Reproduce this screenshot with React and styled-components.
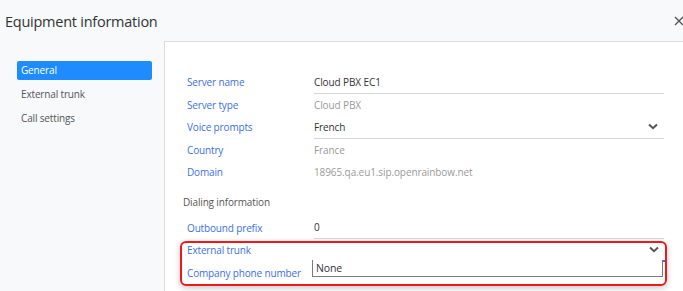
import React from "react";
import styled, { createGlobalStyle } from "styled-components";

const Global = createGlobalStyle`
  html, body {
    margin: 0;
    padding: 0;
    background: #f7f9fb;
    font-family: "Open Sans", "Noto Sans", sans-serif;
    overflow: hidden;
  }
`;

const Dialog = styled.div`
  width: 683px;
  height: 291px;
  display: flex;
  flex-direction: column;
  background: #f7f9fb;
`;

const Header = styled.div`
  height: 41px;
  flex: none;
  display: flex;
  align-items: center;
  justify-content: space-between;
  padding: 0 0 0 5px;
  box-sizing: border-box;
`;

const Title = styled.div`
  font-size: 14.5px;
  color: #333;
  letter-spacing: -0.25px;
  margin-top: 2px;
`;

const Close = styled.div`
  width: 12px;
  height: 12px;
  margin-right: -2px;
  margin-top: 1px;
  color: #555;
  display: flex;
`;

const Body = styled.div`
  flex: 1;
  display: flex;
  min-height: 0;
`;

const Sidebar = styled.div`
  width: 164px;
  flex: none;
  padding: 20px 12px 0 17px;
  box-sizing: border-box;
  display: flex;
  flex-direction: column;
  gap: 5px;
`;

const NavItem = styled.div`
  height: 19px;
  line-height: 19px;
  padding-left: 4px;
  border-radius: 2px;
  font-size: 10px;
  letter-spacing: -0.15px;
  color: ${(p) => (p.active ? "#fff" : "#555")};
  background: ${(p) => (p.active ? "#1e8cff" : "transparent")};
`;

const Panel = styled.div`
  flex: 1;
  background: #fff;
  border-top: 1px solid #dcdcdc;
  border-left: 1px solid #dcdcdc;
  padding: 29px 19px 0 15px;
  box-sizing: border-box;
`;

const Row = styled.div`
  display: grid;
  grid-template-columns: 127px 1fr;
  height: ${(p) => p.h || 22.5}px;
  align-items: stretch;
  padding-left: 7px;
`;

const Label = styled.div`
  display: flex;
  align-items: center;
  font-size: 10px;
  letter-spacing: -0.15px;
  color: #3d6fe6;
  padding-bottom: ${(p) => p.lift || 0}px;
`;

const Value = styled.div`
  position: relative;
  display: flex;
  align-items: center;
  justify-content: space-between;
  font-size: 10px;
  letter-spacing: -0.1px;
  color: ${(p) => (p.muted ? "#9a9a9a" : "#333")};
  border-bottom: ${(p) =>
    p.focus ? "2px solid #1e7be0" : p.line ? "1px solid #d6d6d6" : "none"};
  box-sizing: border-box;
`;

const Chevron = styled.svg`
  width: 10px;
  height: 7px;
  margin-right: 6px;
  margin-top: ${(p) => (p.up ? "-5px" : "0")};
`;

const SectionTitle = styled.div`
  height: 33px;
  display: flex;
  align-items: center;
  padding-left: 3px;
  padding-top: 4px;
  box-sizing: border-box;
  font-size: 10px;
  letter-spacing: -0.15px;
  color: #555;
`;

const Highlight = styled.div`
  margin-right: -3px;
  border: 2px solid #f01818;
  border-radius: 6px;
  box-shadow: 0 2px 6px rgba(0, 0, 0, 0.22);
  padding: 0 0 0 5px;
  margin-top: 2px;
  height: 45px;
  box-sizing: border-box;
  ${Row} {
    padding-left: 0;
  }
`;

const ListBox = styled.div`
  position: absolute;
  left: -2px;
  right: 2px;
  top: 100%;
  height: 17px;
  background: #fff;
  border: 1px solid #7a7a7a;
  border-top: none;
  box-sizing: border-box;
  font-size: 10.5px;
  color: #333;
  padding-left: 3px;
  line-height: 16px;
  z-index: 2;
`;

const Arrow = ({ up }) => (
  <Chevron viewBox="0 0 10 7" up={up}>
    <path d="M1 1.5 L5 5.2 L9 1.5" fill="none" stroke="#555" strokeWidth="2" />
  </Chevron>
);

export default function App() {
  return (
    <Dialog>
      <Global />
      <Header>
        <Title>Equipment information</Title>
        <Close>
          <svg viewBox="0 0 12 12" width="12" height="12">
            <path d="M2 2 L10 10 M10 2 L2 10" stroke="#555" strokeWidth="1.4" />
          </svg>
        </Close>
      </Header>
      <Body>
        <Sidebar>
          <NavItem active>General</NavItem>
          <NavItem>External trunk</NavItem>
          <NavItem>Call settings</NavItem>
        </Sidebar>
        <Panel>
          <Row>
            <Label>Server name</Label>
            <Value line>Cloud PBX EC1</Value>
          </Row>
          <Row>
            <Label>Server type</Label>
            <Value muted>Cloud PBX</Value>
          </Row>
          <Row>
            <Label>Voice prompts</Label>
            <Value line>
              French
              <Arrow />
            </Value>
          </Row>
          <Row>
            <Label>Country</Label>
            <Value muted>France</Value>
          </Row>
          <Row>
            <Label>Domain</Label>
            <Value muted>18965.qa.eu1.sip.openrainbow.net</Value>
          </Row>
          <SectionTitle>Dialing information</SectionTitle>
          <Row>
            <Label>Outbound prefix</Label>
            <Value line>0</Value>
          </Row>
          <Highlight>
            <Row h={19}>
              <Label lift={5}>External trunk</Label>
              <Value focus>
                <span />
                <Arrow up />
                <ListBox>None</ListBox>
              </Value>
            </Row>
            <Row h={21}>
              <Label>Company phone number</Label>
              <Value />
            </Row>
          </Highlight>
        </Panel>
      </Body>
    </Dialog>
  );
}
